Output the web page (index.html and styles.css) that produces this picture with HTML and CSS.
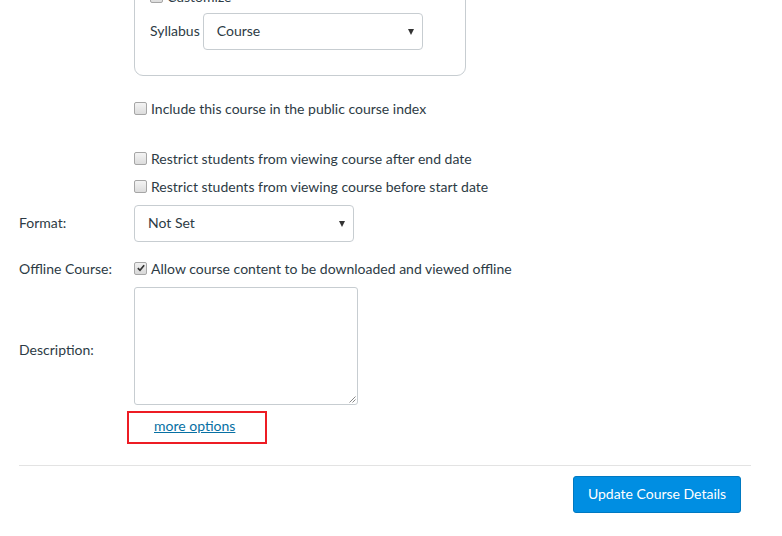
FILE: index.html
```html
<!DOCTYPE html>
<html>
<head>
<meta charset="utf-8">
<link rel="stylesheet" href="styles.css">
</head>
<body>
<div class="page">
  <div class="indent">
    <div class="fieldset">
      <div class="check-row">
        <span class="cb"></span><span>Customize</span>
      </div>
      <div class="syllabus-row">
        <span class="syl-label">Syllabus</span>
        <div class="select syl-select"><span>Course</span><span class="arrow"></span></div>
      </div>
    </div>
    <div class="check-row include-row"><span class="cb"></span><span>Include this course in the public course index</span></div>
    <div class="check-row after-row"><span class="cb"></span><span>Restrict students from viewing course after end date</span></div>
    <div class="check-row before-row"><span class="cb"></span><span>Restrict students from viewing course before start date</span></div>
  </div>

  <div class="form-row format-row">
    <div class="label">Format:</div>
    <div class="select fmt-select"><span>Not Set</span><span class="arrow"></span></div>
  </div>

  <div class="form-row offline-row">
    <div class="label">Offline Course:</div>
    <div class="check-row"><span class="cb checked"><svg viewBox="0 0 12 12" width="10" height="10"><path d="M2.2 6.2 L4.8 8.8 L9.8 2.6" fill="none" stroke="#333" stroke-width="2"/></svg></span><span>Allow course content to be downloaded and viewed offline</span></div>
  </div>

  <div class="form-row desc-row">
    <div class="label desc-label">Description:</div>
    <div class="textarea"><svg class="grip" viewBox="0 0 8 8" width="8" height="8"><path d="M7.5 1.5 L1.5 7.5 M7.5 4.5 L4.5 7.5" stroke="#888" stroke-width="1"/></svg></div>
  </div>

  <div class="indent more-wrap">
    <div class="highlight"><a href="#" class="more">more options</a></div>
  </div>

  <div class="divider"></div>

  <div class="actions">
    <button class="btn">Update Course Details</button>
  </div>
</div>
</body>
</html>
```

FILE: styles.css
```css
html, body {
  margin: 0;
  padding: 0;
  background: #ffffff;
  overflow: hidden;
}
body {
  font-family: Lato, "Open Sans", sans-serif;
  font-size: 14px;
  color: #2d3b45;
  width: 782px;
  height: 536px;
}
.page {
  padding: 0 31px 0 19px;
}
.indent {
  margin-left: 115px;
}
.fieldset {
  margin-top: -40px;
  padding: 26px 15px 25px 15px;
  box-sizing: border-box;
  width: 332px;
  border: 1px solid #c7cdd1;
  border-radius: 9px;
}
.check-row {
  display: flex;
  align-items: center;
  height: 20px;
  line-height: 20px;
  white-space: nowrap;
}
.cb {
  width: 11px;
  height: 11px;
  border: 1px solid #a6a6a6;
  border-radius: 2px;
  background: linear-gradient(#f4f4f4, #dcdcdc);
  margin-right: 4px;
  flex: none;
  display: flex;
  align-items: center;
  justify-content: center;
  position: relative;
  top: -1px;
}
.cb.checked {
  background: linear-gradient(#f0f0f0, #d8d8d8);
}
.syllabus-row {
  display: flex;
  align-items: center;
  margin-top: 6px;
}
.syl-label {
  margin-right: 3px;
  padding-bottom: 2px;
}
.select {
  height: 37px;
  box-sizing: border-box;
  border: 1px solid #c7cdd1;
  border-radius: 4px;
  background: #fff;
  display: flex;
  align-items: center;
  justify-content: space-between;
  padding: 0 8px 2px 13px;
}
.syl-select {
  width: 220px;
}
.arrow {
  width: 0;
  height: 0;
  border-left: 3.5px solid transparent;
  border-right: 3.5px solid transparent;
  border-top: 6px solid #333;
  margin-top: 2px;
}
.include-row {
  margin-top: 23px;
}
.after-row {
  margin-top: 30px;
}
.before-row {
  margin-top: 8px;
}
.form-row {
  display: flex;
  align-items: center;
}
.label {
  width: 115px;
  flex: none;
}
.format-row {
  margin-top: 8px;
}
.format-row .label {
  padding-bottom: 2px;
}
.fmt-select {
  width: 220px;
}
.offline-row {
  margin-top: 17px;
}
.offline-row .label {
  padding-bottom: 2px;
}
.desc-row {
  margin-top: 8px;
}
.desc-label {
  padding-top: 7px;
}
.textarea {
  width: 224px;
  height: 118px;
  box-sizing: border-box;
  border: 1px solid #c7cdd1;
  border-radius: 3px;
  position: relative;
}
.grip {
  position: absolute;
  right: 1px;
  bottom: 1px;
}
.more-wrap {
  margin-left: 108px;
  margin-top: 6px;
}
.highlight {
  width: 140px;
  height: 33px;
  box-sizing: border-box;
  border: 2px solid #ed1c24;
  padding: 0 0 4px 25px;
  display: flex;
  align-items: center;
}
.more {
  color: #0770a3;
  text-decoration: underline;
}
.divider {
  margin-top: 21px;
  height: 1px;
  background: #e3e3e3;
}
.actions {
  display: flex;
  justify-content: flex-end;
  margin-top: 10px;
  padding-right: 10px;
}
.btn {
  width: 168px;
  height: 37px;
  background: #008ee2;
  border: 1px solid #0079c1;
  border-radius: 3px;
  color: #fff;
  font-family: Lato, "Open Sans", sans-serif;
  font-size: 14px;
  padding: 0 0 2px 0;
}
```
